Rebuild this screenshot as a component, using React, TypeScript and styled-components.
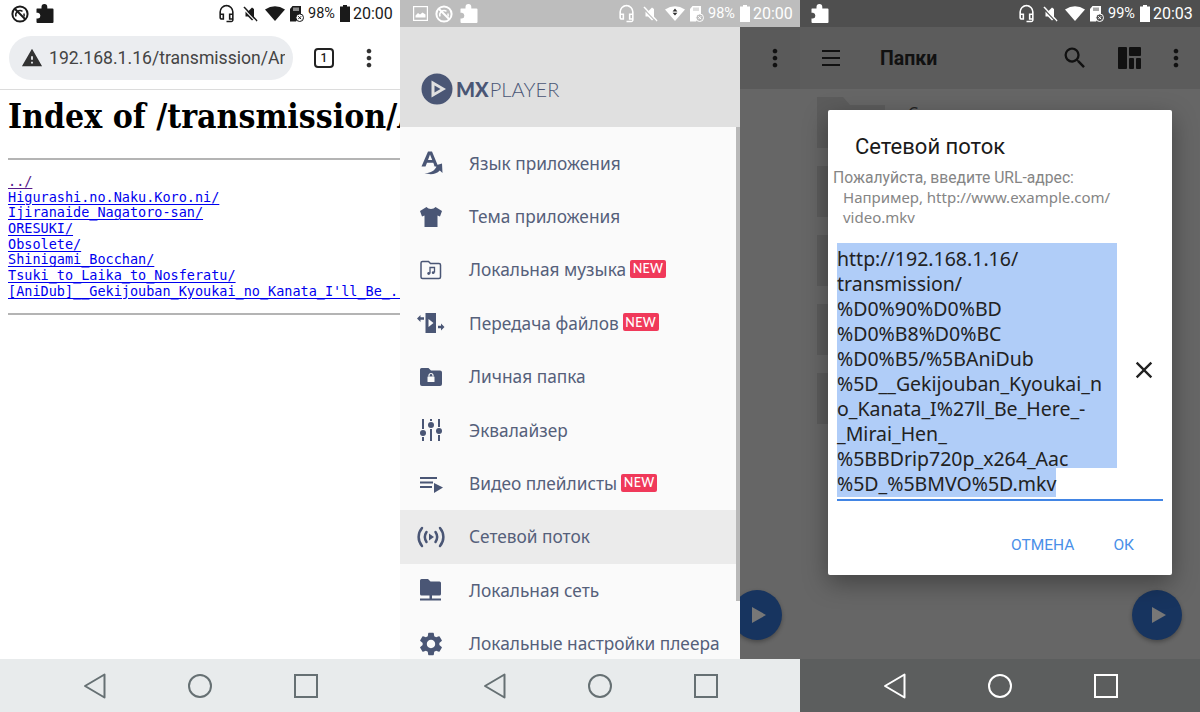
import React from 'react';
import styled, { createGlobalStyle } from 'styled-components';
import { MdMoreVert, MdSearch, MdClose, MdSettings, MdWarning, MdOutlineHeadsetMic } from 'react-icons/md';

const GlobalStyle = createGlobalStyle`
    html, body {
        margin: 0;
        padding: 0;
        background: #fff;
    }
    * {
        box-sizing: border-box;
    }
`;

const SLATE = '#4a5675';

/* status bar drawings */

function DataSaverIcon() {
    return (
        <svg width="18" height="18" viewBox="0 0 18 18" fill="none" stroke="currentColor" strokeWidth="2">
            <circle cx="9" cy="9" r="7.6" />
            <path d="M3.5 3.5 L14.5 14.5" />
            <path d="M5 11.5a4.4 4.4 0 0 1 6.5-5.2M12.8 8.5a4.4 4.4 0 0 1 .2 3" strokeWidth="1.5" />
        </svg>
    );
}

function PuzzleIcon() {
    return (
        <svg width="18" height="19" viewBox="0 0 18 19" fill="currentColor">
            <path d="M1 4.5 H5.5 V3 A2.9 2.9 0 0 1 11.3 3 V4.5 H16.5 Q17.5 4.5 17.5 5.5 V18 Q17.5 19 16.5 19 H1.5 Q0.5 19 0.5 18 V14.5 H2 A2.9 2.9 0 0 0 2 8.8 H0.5 V5 Q0.5 4.5 1 4.5 Z" />
        </svg>
    );
}

function ImageIcon() {
    return (
        <svg width="15" height="15" viewBox="0 0 15 15" fill="none" stroke="currentColor" strokeWidth="1.2">
            <rect x="0.6" y="0.6" width="13.8" height="13.8" />
            <path d="M2.5 11.5 L2.5 9.5 L5 7 L7 8.5 L9.5 6.5 L12.5 8.5 L12.5 11.5 Z" fill="currentColor" stroke="none" />
        </svg>
    );
}

function MuteIcon() {
    return (
        <svg width="15" height="16" viewBox="0 0 15 16" fill="currentColor">
            <path d="M2.5 5.5 L5 5.5 L9 1.5 L11 3 L11 13 L9 14.5 L5 10.5 L2.5 10.5 Z" />
            <path d="M1 1 L14 15" stroke="currentColor" strokeWidth="1.6" />
            <path d="M0.2 2.4 L12.6 15.4" stroke="var(--status-bg)" strokeWidth="1.1" />
        </svg>
    );
}

function WifiIcon({ arrows, arrowColor }: { arrows?: boolean; arrowColor: string }) {
    return (
        <svg width="20" height="15" viewBox="0 0 20 15" fill="currentColor">
            <path d="M0 3.6 Q10 -3 20 3.6 L10 15 Z" />
            {arrows && <path d="M10 2.6 L12.4 5.4 L7.6 5.4 Z M7.6 6.8 L12.4 6.8 L10 9.6 Z" fill={arrowColor} />}
        </svg>
    );
}

function SdIcon({ badge }: { badge: string }) {
    return (
        <svg width="15" height="16" viewBox="0 0 15 16">
            <path d="M3.5 0 L12 0 L12 9 L7 15.5 L1 15.5 L1 3 Z" fill="currentColor" />
            <path d="M5 1.5 V5 M7 1.5 V5 M9 1.5 V5" stroke={badge} strokeWidth="1" />
            <circle cx="10.7" cy="11.7" r="3.8" fill={badge} stroke="currentColor" strokeWidth="1" />
            <path d="M9.2 10.2 L12.2 13.2 M12.2 10.2 L9.2 13.2" stroke="currentColor" strokeWidth="1" />
        </svg>
    );
}

function BatteryIcon() {
    return (
        <svg width="10" height="17" viewBox="0 0 10 17" fill="currentColor">
            <rect x="3" y="0" width="4" height="2" />
            <rect x="0" y="1.5" width="10" height="15.5" />
        </svg>
    );
}

/* drawer icons */

function LanguageIcon() {
    return (
        <svg width="24" height="24" viewBox="0 0 24 24" fill="currentColor">
            <path d="M9 0.5 H13 L19 15 H15.5 L14.3 11.8 H8 L6.5 15.5 H2.5 Z M9 9 H13.2 L11 3.5 Z" fillRule="evenodd" />
            <path d="M5.5 22 C11 22.5 15.5 20 17.5 15.8 L14.5 15 L23 12.5 L23.5 22 L20.8 19.5 C17 23.5 11 24 5.5 22 Z" />
        </svg>
    );
}

function ShirtIcon() {
    return (
        <svg width="24" height="24" viewBox="0 0 24 24" fill="currentColor">
            <path d="M7.5 2 C9.5 4.5 14.5 4.5 16.5 2 L23 6 L21 11.5 L18.5 10.5 L18.5 22 L5.5 22 L5.5 10.5 L3 11.5 L1 6 Z" />
        </svg>
    );
}

function MusicFolderIcon() {
    return (
        <svg width="24" height="24" viewBox="0 0 24 24" fill="none" stroke="currentColor" strokeWidth="1.5">
            <path d="M3.5 3.5 H9.5 L11.5 5.5 H20 Q21.5 5.5 21.5 7 V19 Q21.5 20.5 20 20.5 H3.5 Q2 20.5 2 19 V5 Q2 3.5 3.5 3.5 Z" />
            <path d="M11 15.5 V9.5 H15.5 V14.5" strokeWidth="1.3" />
            <circle cx="9.7" cy="15.5" r="1.4" fill="currentColor" strokeWidth="0" />
            <circle cx="14.2" cy="14.7" r="1.4" fill="currentColor" strokeWidth="0" />
        </svg>
    );
}

function TransferIcon() {
    return (
        <svg width="28" height="24" viewBox="0 0 28 24" fill="currentColor">
            <path d="M8.5 2 H19 V22 H8.5 Z M11.5 8 V16 L16.5 12 Z" fillRule="evenodd" />
            <path d="M0 7.5 L3.5 4 V6.2 H7 V8.8 H3.5 V11 Z" />
            <path d="M27.5 16 L24 12.5 V14.7 H21 V17.3 H24 V19.5 Z" />
        </svg>
    );
}

function LockFolderIcon() {
    return (
        <svg width="24" height="24" viewBox="0 0 24 24">
            <path d="M2.5 3 H9.5 L12 5.5 H21 Q23 5.5 23 7.5 V19 Q23 21 21 21 H3 Q1 21 1 19 V4.5 Q1 3 2.5 3 Z" fill="currentColor" />
            <rect x="8.5" y="11.5" width="7" height="5.5" rx="0.5" fill="#fafafa" />
            <path d="M10 11.5 V10.5 A2 2 0 0 1 14 10.5 V11.5" fill="none" stroke="#fafafa" strokeWidth="1.2" />
        </svg>
    );
}

function EqualizerIcon() {
    return (
        <svg width="24" height="24" viewBox="0 0 24 24" fill="none" stroke="currentColor" strokeWidth="2">
            <path d="M4 1 V11 M4 19 V23 M12 1 V3 M12 11 V23 M20 1 V9 M20 17 V23" />
            <circle cx="4" cy="15" r="3" fill="currentColor" stroke="none" />
            <circle cx="12" cy="7" r="3" fill="currentColor" stroke="none" />
            <circle cx="20" cy="13" r="3" fill="currentColor" stroke="none" />
        </svg>
    );
}

function PlaylistIcon() {
    return (
        <svg width="24" height="24" viewBox="0 0 24 24" fill="currentColor">
            <rect x="1" y="5" width="17" height="2" />
            <rect x="1" y="9.5" width="13" height="2" />
            <rect x="1" y="14" width="12" height="2" />
            <path d="M15 11 L24 15.5 L15 21 Z" />
        </svg>
    );
}

function StreamIcon() {
    return (
        <svg width="28" height="24" viewBox="0 0 28 24" fill="none" stroke="currentColor" strokeWidth="2.5" strokeLinecap="round">
            <path d="M5 3 C0.5 8.5 0.5 15.5 5 21" />
            <path d="M9.5 7 C7.5 10 7.5 14 9.5 17" />
            <path d="M23 3 C27.5 8.5 27.5 15.5 23 21" />
            <path d="M18.5 7 C20.5 10 20.5 14 18.5 17" />
            <path d="M12 8.5 L17 12 L12 15.5 Z" fill="currentColor" stroke="none" />
        </svg>
    );
}

function NetworkFolderIcon() {
    return (
        <svg width="24" height="24" viewBox="0 0 24 24" fill="currentColor">
            <path d="M2.5 1 H9 L11.5 3.5 H20.5 Q22 3.5 22 5 V16 Q22 17.5 20.5 17.5 H2.5 Q1 17.5 1 16 V2.5 Q1 1 2.5 1 Z" />
            <rect x="10.5" y="17" width="2.5" height="4" />
            <rect x="1" y="20.5" width="21" height="2" />
        </svg>
    );
}

function LayoutIcon() {
    return (
        <svg width="23" height="22" viewBox="0 0 23 22" fill="currentColor">
            <rect x="0" y="0" width="9" height="22" rx="1" />
            <rect x="11" y="0" width="12" height="9" rx="1" />
            <rect x="11" y="11" width="5" height="11" rx="1" />
            <rect x="18" y="11" width="5" height="11" rx="1" />
        </svg>
    );
}

function BackIcon() {
    return (
        <svg width="24" height="26" viewBox="0 0 24 26" fill="none" stroke="currentColor" strokeWidth="2">
            <path d="M21.5 1.5 V24.5 L2 13 Z" strokeLinejoin="round" />
        </svg>
    );
}

function HomeIcon() {
    return (
        <svg width="24" height="24" viewBox="0 0 24 24" fill="none" stroke="currentColor" strokeWidth="2">
            <circle cx="12" cy="12" r="11" />
        </svg>
    );
}

function RecentIcon() {
    return (
        <svg width="24" height="24" viewBox="0 0 24 24" fill="none" stroke="currentColor" strokeWidth="2">
            <rect x="1" y="1" width="22" height="22" />
        </svg>
    );
}

/* shared parts */

type StatusProps = {
    bg: string;
    fg: string;
    leading: React.ReactNode;
    level: string;
    time: string;
    arrows?: boolean;
};

function StatusBar({ bg, fg, leading, level, time, arrows }: StatusProps) {
    return (
        <StatusRow $bg={bg} $fg={fg} style={{ ['--status-bg' as string]: bg }}>
            <StatusGroup $gap={7}>{leading}</StatusGroup>
            <StatusGroup $gap={0}>
                <HeadsetSlot><MdOutlineHeadsetMic size={19} /></HeadsetSlot>
                <MuteSlot><MuteIcon /></MuteSlot>
                <WifiSlot><WifiIcon arrows={arrows} arrowColor="#333" /></WifiSlot>
                <SdSlot><SdIcon badge={bg} /></SdSlot>
                <Level>{level}</Level>
                <BatterySlot><BatteryIcon /></BatterySlot>
                <Clock>{time}</Clock>
            </StatusGroup>
        </StatusRow>
    );
}

function NavBar({ bg, fg }: { bg: string; fg: string }) {
    return (
        <NavRow $bg={bg} $fg={fg}>
            <BackIcon />
            <HomeIcon />
            <RecentIcon />
        </NavRow>
    );
}

/* first screen */

const LINKS = [
    'Higurashi.no.Naku.Koro.ni/',
    'Ijiranaide_Nagatoro-san/',
    'ORESUKI/',
    'Obsolete/',
    'Shinigami_Bocchan/',
    'Tsuki_to_Laika_to_Nosferatu/',
    "[AniDub]__Gekijouban_Kyoukai_no_Kanata_I'll_Be_..>",
];

function BrowserScreen() {
    return (
        <Pane>
            <StatusBar
                bg="#ffffff"
                fg="#1a1a1a"
                level="98%"
                time="20:00"
                leading={
                    <>
                        <DataSaverIcon />
                        <PuzzleIcon />
                    </>
                }
            />
            <BrowserBar>
                <Omnibox>
                    <MdWarning size={22} color="#333" />
                    <UrlText>192.168.1.16/transmission/Ani</UrlText>
                </Omnibox>
                <TabCount>1</TabCount>
                <BarDots><MdMoreVert size={28} /></BarDots>
            </BrowserBar>
            <PageBody>
                <IndexTitle>Index of /transmission/AniDub/</IndexTitle>
                <Rule />
                <Listing>
                    <ListLink $visited>../</ListLink>
                    {LINKS.map((name) => (
                        <ListLink key={name}>{name}</ListLink>
                    ))}
                </Listing>
                <Rule />
            </PageBody>
            <NavBar bg="#e8ebec" fg="#667073" />
        </Pane>
    );
}

/* second screen */

const MENU = [
    { label: 'Язык приложения', icon: <LanguageIcon /> },
    { label: 'Тема приложения', icon: <ShirtIcon /> },
    { label: 'Локальная музыка', icon: <MusicFolderIcon />, isNew: true },
    { label: 'Передача файлов', icon: <TransferIcon />, isNew: true },
    { label: 'Личная папка', icon: <LockFolderIcon /> },
    { label: 'Эквалайзер', icon: <EqualizerIcon /> },
    { label: 'Видео плейлисты', icon: <PlaylistIcon />, isNew: true },
    { label: 'Сетевой поток', icon: <StreamIcon />, active: true },
    { label: 'Локальная сеть', icon: <NetworkFolderIcon /> },
    { label: 'Локальные настройки плеера', icon: <MdSettings size={28} /> },
];

function DrawerScreen() {
    return (
        <Pane>
            <StatusBar
                bg="#bdbdbd"
                fg="#ffffff"
                level="98%"
                time="20:00"
                arrows
                leading={
                    <>
                        <ImageSlot><ImageIcon /></ImageSlot>
                        <DataSaverIcon />
                        <PuzzleIcon />
                    </>
                }
            />
            <DrawerLayout>
                <Drawer>
                    <DrawerHeader>
                        <svg width="32" height="32" viewBox="0 0 32 32">
                            <circle cx="16" cy="16" r="15.5" fill={SLATE} />
                            <path d="M10.5 7.5 L25 16 L10.5 24.5 Z" fill="#e0e0e0" />
                            <path d="M13.5 12.5 L19.5 16 L13.5 19.5 Z" fill={SLATE} />
                        </svg>
                        <LogoText><b>MX</b>PLAYER</LogoText>
                    </DrawerHeader>
                    <MenuList>
                        {MENU.map((item) => (
                            <MenuRow key={item.label} $active={item.active}>
                                <MenuIcon>{item.icon}</MenuIcon>
                                <MenuLabel>{item.label}</MenuLabel>
                                {item.isNew && <NewBadge>NEW</NewBadge>}
                            </MenuRow>
                        ))}
                    </MenuList>
                    <DrawerScroll />
                </Drawer>
                <DimmedApp>
                    <DimmedBar><MdMoreVert size={28} /></DimmedBar>
                    <PlayFab>
                        <svg width="20" height="20" viewBox="0 0 20 20"><path d="M4 2 L18 10 L4 18 Z" /></svg>
                    </PlayFab>
                </DimmedApp>
            </DrawerLayout>
            <NavBar bg="#e8ebec" fg="#667073" />
        </Pane>
    );
}

/* third screen */

const URL_LINES = [
    'http://192.168.1.16/',
    'transmission/',
    '%D0%90%D0%BD',
    '%D0%B8%D0%BC',
    '%D0%B5/%5BAniDub',
    '%5D__Gekijouban_Kyoukai_n',
    'o_Kanata_I%27ll_Be_Here_-',
    '_Mirai_Hen_',
    '%5BBDrip720p_x264_Aac',
];

function DialogScreen() {
    return (
        <Pane>
            <StatusBar
                bg="#4f4f4f"
                fg="#ffffff"
                level="99%"
                time="20:03"
                leading={<PuzzleIcon />}
            />
            <FolderScreen>
                <FolderBar>
                    <BarMenu>
                        <span />
                        <span />
                        <span />
                    </BarMenu>
                    <FolderTitle>Папки</FolderTitle>
                    <BarActions>
                        <SearchSlot><MdSearch size={28} /></SearchSlot>
                        <LayoutIcon />
                        <MdMoreVert size={28} />
                    </BarActions>
                </FolderBar>
                <FolderList>
                    {[0, 1, 2, 3, 4].map((n) => (
                        <FolderRow key={n}>
                            <FolderThumb />
                            {n === 0 && <FolderName>С</FolderName>}
                        </FolderRow>
                    ))}
                </FolderList>
                <PlayFab>
                    <svg width="20" height="20" viewBox="0 0 20 20"><path d="M4 2 L18 10 L4 18 Z" /></svg>
                </PlayFab>
                <DialogLayer>
                    <Dialog>
                        <DialogTitle>Сетевой поток</DialogTitle>
                        <DialogPrompt>Пожалуйста, введите URL-адрес:</DialogPrompt>
                        <DialogHint>Например, http://www.example.com/<br />video.mkv</DialogHint>
                        <UrlField>
                            <UrlValue>
                                {URL_LINES.map((line) => (
                                    <SelectedLine key={line}><LineText>{line}</LineText></SelectedLine>
                                ))}
                                <LastLine><LineText>%5D_%5BMVO%5D.mkv</LineText></LastLine>
                            </UrlValue>
                            <ClearButton><MdClose size={28} /></ClearButton>
                        </UrlField>
                        <DialogActions>
                            <DialogButton>ОТМЕНА</DialogButton>
                            <DialogButton>ОК</DialogButton>
                        </DialogActions>
                    </Dialog>
                </DialogLayer>
            </FolderScreen>
            <NavBar bg="#5c5e5e" fg="#ffffff" />
        </Pane>
    );
}

export default function App() {
    return (
        <>
            <GlobalStyle />
            <Screens>
                <BrowserScreen />
                <DrawerScreen />
                <DialogScreen />
            </Screens>
        </>
    );
}

const Screens = styled.div`
    display: grid;
    grid-template-columns: repeat(3, 400px);
    width: 1200px;
    height: 712px;
    overflow: hidden;
    font-family: 'Noto Sans', Roboto, sans-serif;
`;

const Pane = styled.section`
    display: flex;
    flex-direction: column;
    height: 712px;
    min-width: 0;
    overflow: hidden;
    background: #fff;
`;

const StatusRow = styled.div<{ $bg: string; $fg: string }>`
    flex: none;
    display: flex;
    align-items: center;
    justify-content: space-between;
    height: 27px;
    padding: 0 8px 0 11px;
    background: ${(p) => p.$bg};
    color: ${(p) => p.$fg};
    font-family: Roboto, sans-serif;
`;

const StatusGroup = styled.div<{ $gap: number }>`
    display: flex;
    align-items: center;
    gap: ${(p) => p.$gap}px;
`;

const ImageSlot = styled.span`
    display: flex;
    margin-left: 2px;
`;

const HeadsetSlot = styled.span`
    display: flex;
    margin-right: 7px;
`;

const MuteSlot = styled.span`
    display: flex;
    margin-right: 7px;
`;

const WifiSlot = styled.span`
    display: flex;
    margin-right: 4px;
`;

const SdSlot = styled.span`
    display: flex;
    margin-right: 4px;
`;

const Level = styled.span`
    font-size: 14.5px;
    width: 32px;
`;

const BatterySlot = styled.span`
    display: flex;
    margin-right: 3px;
`;

const Clock = styled.span`
    font-size: 16px;
    width: 39px;
`;

const NavRow = styled.div<{ $bg: string; $fg: string }>`
    flex: none;
    display: flex;
    align-items: center;
    justify-content: center;
    gap: 81.5px;
    height: 53px;
    background: ${(p) => p.$bg};
    color: ${(p) => p.$fg};
`;

const BrowserBar = styled.div`
    flex: none;
    display: flex;
    align-items: center;
    height: 63px;
    padding: 0 0 1px 9px;
    border-bottom: 1px solid #dcdcdc;
`;

const Omnibox = styled.div`
    display: flex;
    align-items: center;
    gap: 6px;
    width: 284px;
    height: 44px;
    padding: 0 8px 0 12px;
    border-radius: 22px;
    background: #ebedf0;
    overflow: hidden;
`;

const UrlText = styled.span`
    flex: 1;
    min-width: 0;
    font-family: Roboto, sans-serif;
    font-size: 17.6px;
    color: #444;
    white-space: nowrap;
    overflow: hidden;
`;

const TabCount = styled.span`
    display: flex;
    align-items: center;
    justify-content: center;
    width: 20px;
    height: 20px;
    margin-left: 21px;
    border: 2px solid #222;
    border-radius: 4px;
    font-family: Roboto, sans-serif;
    font-size: 12px;
    font-weight: 500;
    color: #222;
`;

const BarDots = styled.span`
    display: flex;
    margin-left: 21px;
    color: #333;
`;

const PageBody = styled.main`
    flex: 1;
    min-height: 0;
    padding: 0 0 0 8px;
    overflow: hidden;
`;

const IndexTitle = styled.h1`
    margin: 0;
    padding-top: 7px;
    height: 68px;
    font-family: 'DejaVu Serif Condensed', 'DejaVu Serif', serif;
    font-stretch: condensed;
    font-size: 33.5px;
    font-weight: 700;
    line-height: 40px;
    color: #000;
    white-space: nowrap;
`;

const Rule = styled.div`
    height: 2px;
    background: #b4b4b4;
`;

const Listing = styled.div`
    display: flex;
    flex-direction: column;
    padding: 14px 0 13px;
`;

const ListLink = styled.a<{ $visited?: boolean }>`
    height: 15.7px;
    font-family: 'DejaVu Sans Mono', monospace;
    font-size: 13.5px;
    line-height: 15.7px;
    color: ${(p) => (p.$visited ? '#551a8b' : '#0000ee')};
    text-decoration: underline;
    text-underline-offset: 2px;
    white-space: pre;
`;

const DrawerLayout = styled.div`
    flex: 1;
    min-height: 0;
    display: flex;
`;

const Drawer = styled.nav`
    position: relative;
    z-index: 1;
    flex: none;
    width: 340px;
    overflow: hidden;
    background: #fafafa;
`;

const DrawerHeader = styled.div`
    display: flex;
    align-items: center;
    gap: 3px;
    height: 100px;
    padding: 24px 0 0 21px;
    background: #e0e0e0;
`;

const LogoText = styled.span`
    font-family: Lato, sans-serif;
    font-size: 20px;
    font-weight: 300;
    letter-spacing: 0.1px;
    color: ${SLATE};
    b {
        font-weight: 900;
        letter-spacing: 0;
        margin-right: 1px;
    }
`;

const MenuList = styled.div`
    padding-top: 9.5px;
`;

const MenuRow = styled.div<{ $active?: boolean }>`
    display: flex;
    align-items: center;
    height: 53.4px;
    padding-left: 17px;
    background: ${(p) => (p.$active ? '#ebebeb' : 'transparent')};
`;

const MenuIcon = styled.span`
    display: flex;
    align-items: center;
    justify-content: center;
    flex: none;
    width: 28px;
    margin-right: 24px;
    color: ${SLATE};
`;

const MenuLabel = styled.span`
    font-size: 17.3px;
    color: #55607a;
    white-space: nowrap;
`;

const NewBadge = styled.span`
    display: flex;
    align-items: center;
    justify-content: center;
    width: 36px;
    height: 18px;
    margin: -2px 0 0 4px;
    border-radius: 2px;
    background: #f0395a;
    color: #fff;
    font-family: Lato, sans-serif;
    font-size: 12.5px;
    font-weight: 500;
    letter-spacing: 0.3px;
`;

const DrawerScroll = styled.div`
    position: absolute;
    top: 100px;
    right: 0;
    width: 4px;
    height: 474px;
    background: #b8b8b8;
`;

const DimmedApp = styled.div`
    position: relative;
    flex: 1;
    background: #666;
`;

const DimmedBar = styled.div`
    display: flex;
    align-items: center;
    height: 62px;
    padding-left: 21px;
    background: #5a5a5a;
    color: #111;
`;

const PlayFab = styled.div`
    position: absolute;
    right: 18px;
    bottom: 19px;
    display: flex;
    align-items: center;
    justify-content: center;
    width: 50px;
    height: 50px;
    padding-left: 2px;
    border-radius: 50%;
    background: #17345f;
    box-shadow: 0 2px 4px rgba(0, 0, 0, 0.3);
    fill: #777;
`;

const FolderScreen = styled.div`
    position: relative;
    flex: 1;
    min-height: 0;
    overflow: hidden;
    background: #666;
`;

const FolderBar = styled.div`
    display: flex;
    align-items: center;
    height: 62px;
    padding: 0 10px 0 22px;
    background: #5c5c5c;
    color: #111;
`;

const BarMenu = styled.div`
    display: flex;
    flex-direction: column;
    gap: 5px;
    width: 18px;
    span {
        display: block;
        height: 2px;
        background: #111;
    }
`;

const FolderTitle = styled.h2`
    flex: 1;
    margin: 0 0 0 40px;
    font-family: Roboto, sans-serif;
    font-size: 19.5px;
    font-weight: 700;
    color: #111;
`;

const BarActions = styled.div`
    display: flex;
    align-items: center;
    gap: 21px;
`;

const SearchSlot = styled.span`
    display: flex;
    margin-right: 8px;
`;

const FolderList = styled.div`
    display: flex;
    flex-direction: column;
    gap: 18px;
    padding: 8px 0 0 17px;
`;

const FolderRow = styled.div`
    display: flex;
    gap: 23px;
`;

const FolderThumb = styled.div`
    width: 68px;
    height: 51px;
    background: #5c5c5c;
    clip-path: polygon(0 0, 26px 0, 33px 8px, 100% 8px, 100% 100%, 0 100%);
`;

const FolderName = styled.span`
    margin-top: 5px;
    font-size: 16px;
    line-height: 22px;
    color: #222;
`;

const DialogLayer = styled.div`
    position: absolute;
    inset: 0;
    display: flex;
    align-items: center;
    justify-content: center;
    padding-bottom: 1px;
`;

const Dialog = styled.div`
    display: flex;
    flex-direction: column;
    width: 344px;
    height: 465px;
    padding: 25px 9px 0 5px;
    border-radius: 2px;
    background: #fff;
    box-shadow: 0 8px 24px rgba(0, 0, 0, 0.35);
`;

const DialogTitle = styled.h3`
    margin: 0 0 0 22px;
    font-family: Roboto, sans-serif;
    font-size: 22px;
    font-weight: 400;
    line-height: 24px;
    color: #1a1a1a;
`;

const DialogPrompt = styled.div`
    margin-top: 9px;
    font-family: Roboto, sans-serif;
    font-size: 15.7px;
    line-height: 20px;
    color: #858585;
`;

const DialogHint = styled.div`
    margin: 0 0 0 10px;
    font-family: 'Noto Sans', sans-serif;
    font-size: 15px;
    line-height: 19.5px;
    color: #858585;
`;

const UrlField = styled.div`
    position: relative;
    margin: 16px 0 0 4px;
    padding-bottom: 2px;
    border-bottom: 2px solid #4285e4;
`;

const UrlValue = styled.div`
    display: flex;
    flex-direction: column;
    align-items: flex-start;
    width: 280px;
    font-family: 'Noto Sans', sans-serif;
    font-size: 19.5px;
    color: #222;
    white-space: nowrap;
`;

const SelectedLine = styled.div`
    width: 280px;
    height: 25px;
    padding-top: 5px;
    line-height: 21px;
    background: #b0cdf8;
`;

const LastLine = styled.div`
    height: 29px;
    padding-top: 5px;
    line-height: 21px;
    background: #b0cdf8;
`;

// keeps descenders above the next line's selection background
const LineText = styled.span`
    position: relative;
    z-index: 1;
`;

const ClearButton = styled.span`
    position: absolute;
    right: 5px;
    top: 113px;
    display: flex;
    color: #222;
`;

const DialogActions = styled.div`
    display: flex;
    justify-content: flex-end;
    gap: 39px;
    margin-top: 35px;
    padding-right: 29px;
`;

const DialogButton = styled.span`
    font-family: Roboto, sans-serif;
    font-size: 15.5px;
    color: #4a8fe8;
`;
